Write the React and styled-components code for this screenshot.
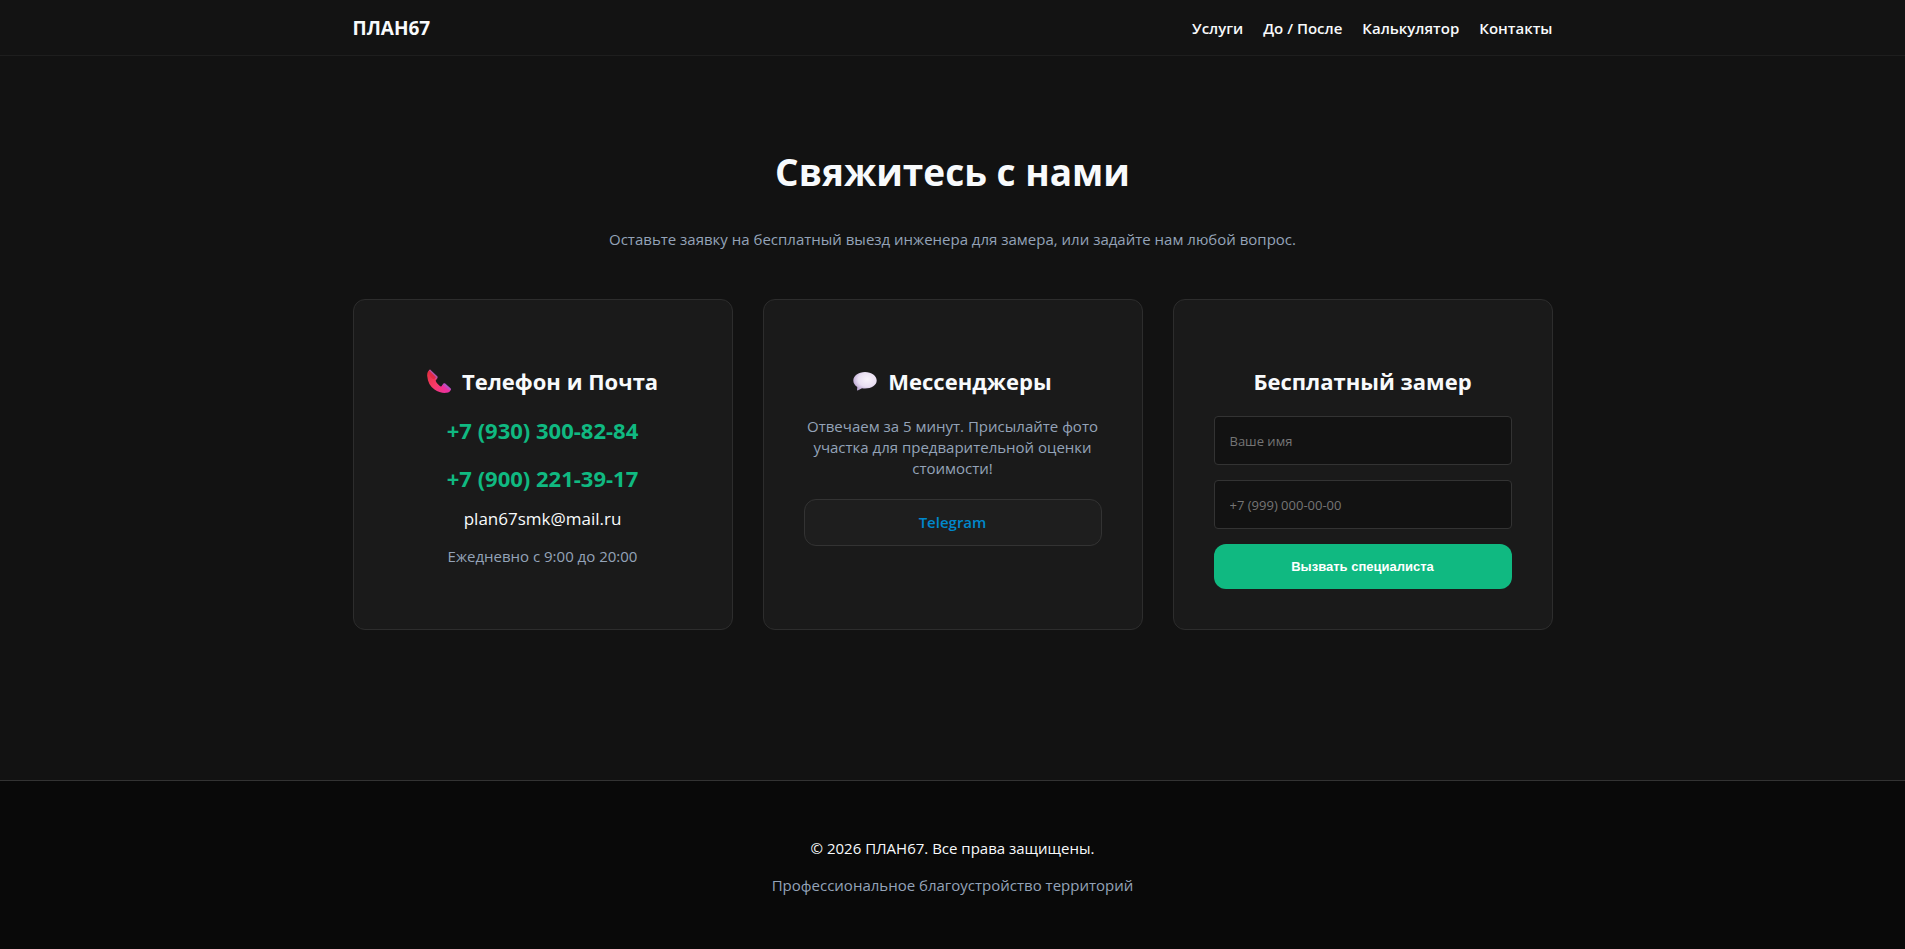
import React from 'react';
import styled, { createGlobalStyle } from 'styled-components';

const GlobalStyle = createGlobalStyle`
  * {
    box-sizing: border-box;
  }

  body {
    margin: 0;
    background: #121212;
    color: #f8fafc;
    font-family: 'Segoe UI', 'Open Sans', 'Noto Sans', sans-serif;
    font-size: 15px;
    line-height: 21px;
  }

  a {
    color: inherit;
    text-decoration: none;
  }

  h1,
  h2,
  p {
    margin: 0;
  }
`;

const Page = styled.div`
  display: flex;
  flex-direction: column;
  min-height: 100vh;
`;

const Container = styled.div`
  width: 100%;
  max-width: 1240px;
  margin: 0 auto;
  padding: 0 20px;
`;

const Header = styled.header`
  border-bottom: 1px solid #1e1e1e;
  background: #131313;
`;

const HeaderRow = styled(Container)`
  display: flex;
  align-items: center;
  justify-content: space-between;
  padding-top: 16px;
  padding-bottom: 15px;
`;

const Logo = styled.a`
  font-size: 19px;
  font-weight: 700;
  line-height: 24px;
`;

const Nav = styled.nav`
  display: flex;
  gap: 20px;
  font-weight: 600;
`;

const Main = styled.main`
  flex: 1;
  padding: 89px 0 150px;
  text-align: center;
`;

const Title = styled.h1`
  margin-bottom: 31px;
  font-size: 37px;
  font-weight: 700;
  line-height: 53px;
`;

const Muted = styled.p`
  color: #94a3b8;
`;

const Cards = styled.div`
  display: grid;
  grid-template-columns: repeat(auto-fit, minmax(300px, 1fr));
  gap: 30px;
  margin-top: 49px;
`;

const Card = styled.section`
  padding: 65px 40px 40px;
  border: 1px solid #2d2d2d;
  border-radius: 12px;
  background: #1a1a1a;
`;

const CardTitle = styled.h2`
  display: flex;
  align-items: center;
  justify-content: center;
  gap: 11px;
  margin-bottom: 19px;
  font-size: 22px;
  font-weight: 700;
  line-height: 32px;
`;

const Contacts = styled.div`
  display: flex;
  flex-direction: column;
  align-items: center;
`;

const Phones = styled.div`
  display: flex;
  flex-direction: column;
  gap: 20px;
  margin-bottom: 15px;
`;

const Phone = styled.a`
  color: #10b981;
  font-size: 22px;
  font-weight: 700;
  line-height: 28px;
`;

const Mail = styled.a`
  margin-bottom: 15px;
  font-size: 17px;
  line-height: 24px;
`;

const TelegramLink = styled.a`
  display: block;
  margin-top: 20px;
  padding: 12px;
  border: 1px solid #333;
  border-radius: 12px;
  background: #1e1e1e;
  color: #0088cc;
  font-weight: 600;
`;

const Form = styled.form`
  display: flex;
  flex-direction: column;
  gap: 15px;
`;

const Input = styled.input`
  width: 100%;
  height: 49px;
  padding: 0 15px;
  border: 1px solid #333;
  border-radius: 4px;
  background: #121212;
  color: #f8fafc;
  font-family: inherit;
  font-size: 13px;

  &::placeholder {
    color: #757575;
  }
`;

const Submit = styled.button`
  height: 45px;
  border: 0;
  border-radius: 12px;
  background: #10b981;
  color: #fff;
  font-family: Arial, 'Liberation Sans', sans-serif;
  font-size: 13px;
  font-weight: 700;
  cursor: pointer;
`;

const Footer = styled.footer`
  padding: 57px 0 55px;
  border-top: 1px solid #333;
  background: #090909;
  text-align: center;

  p + p {
    margin-top: 16px;
  }
`;

const links = ['Услуги', 'До / После', 'Калькулятор', 'Контакты'];

const phones = ['+7 (930) 300-82-84', '+7 (900) 221-39-17'];

const PhoneIcon = () => (
  <svg width="24" height="24" viewBox="0 0 24 24" aria-hidden="true">
    <defs>
      <linearGradient id="handset" x1="0" y1="0" x2="1" y2="1">
        <stop offset="0" stopColor="#e0303c" />
        <stop offset="0.5" stopColor="#f83a68" />
        <stop offset="1" stopColor="#e82fae" />
      </linearGradient>
    </defs>
    <path
      d="M3 .5C1 1.5 0 4 .2 7c.5 6 3 10.500 7.300 13.500 3.500 2.500 8 3.700 12 3.300 2.500-.3 4-1.500 4.300-3.600L18 15l-3.800 2.700c-2.200-1-4.400-3.400-5.600-6L10.500 9z"
      fill="url(#handset)"
    />
    <path d="M3 .4l7.300 6.800c.5.600.4 1.200 0 1.800L8.600 10 1.800 2.400C2 1.500 2.300.8 3 .4z" fill="#b453a8" />
    <path d="M2.500 1.800L9 8.200 7.200 10.300C4.500 10 2 6 1.700 3z" fill="#e22b45" />
    <path d="M16.300 14.700c.7-.6 1.500-.6 2.200 0l5 4.500c.5.500.5 1.200.2 1.800l-1.200.6-7-5.800z" fill="#b94fc0" />
    <path d="M15.500 15.800l7 5.800c-3 .9-6.500-.8-8.300-3.900z" fill="#ee2fa0" />
  </svg>
);

const ChatIcon = () => (
  <svg width="24" height="24" viewBox="0 0 24 24" aria-hidden="true">
    <defs>
      <radialGradient id="bubble" cx="0.6" cy="0.4" r="0.65">
        <stop offset="0" stopColor="#f8f3fb" />
        <stop offset="0.6" stopColor="#e9dff2" />
        <stop offset="1" stopColor="#b9a3d0" />
      </radialGradient>
    </defs>
    <path
      d="M12 3C5.400 3 .3 6.700.3 11.500c0 2.600 1.500 4.900 4 6.400L4 21c0 .4.400.6.700.4l4.300-2.200c1 .2 2 .3 3 .3 6.600 0 11.700-3.400 11.700-8S18.600 3 12 3z"
      fill="url(#bubble)"
    />
  </svg>
);

const App = () => (
  <Page>
    <GlobalStyle />
    <Header>
      <HeaderRow>
        <Logo href="#">ПЛАН67</Logo>
        <Nav>
          {links.map(link => (
            <a key={link} href="#">
              {link}
            </a>
          ))}
        </Nav>
      </HeaderRow>
    </Header>
    <Main>
      <Container>
        <Title>Свяжитесь с нами</Title>
        <Muted>
          Оставьте заявку на бесплатный выезд инженера для замера, или задайте
          нам любой вопрос.
        </Muted>
        <Cards>
          <Card>
            <CardTitle>
              <PhoneIcon />
              Телефон и Почта
            </CardTitle>
            <Contacts>
              <Phones>
                {phones.map(phone => (
                  <Phone key={phone} href={`tel:${phone.replace(/[^+\d]/g, '')}`}>
                    {phone}
                  </Phone>
                ))}
              </Phones>
              <Mail href="mailto:plan67smk@mail.ru">plan67smk@mail.ru</Mail>
              <Muted>Ежедневно с 9:00 до 20:00</Muted>
            </Contacts>
          </Card>
          <Card>
            <CardTitle>
              <ChatIcon />
              Мессенджеры
            </CardTitle>
            <Muted>
              Отвечаем за 5 минут. Присылайте фото участка для предварительной
              оценки стоимости!
            </Muted>
            <TelegramLink href="#">Telegram</TelegramLink>
          </Card>
          <Card>
            <CardTitle>Бесплатный замер</CardTitle>
            <Form onSubmit={e => e.preventDefault()}>
              <Input type="text" aria-label="Ваше имя" placeholder="Ваше имя" />
              <Input
                type="tel"
                aria-label="Телефон"
                placeholder="+7 (999) 000-00-00"
              />
              <Submit type="submit">Вызвать специалиста</Submit>
            </Form>
          </Card>
        </Cards>
      </Container>
    </Main>
    <Footer>
      <Container>
        <p>© 2026 ПЛАН67. Все права защищены.</p>
        <Muted>Профессиональное благоустройство территорий</Muted>
      </Container>
    </Footer>
  </Page>
);

export default App;
